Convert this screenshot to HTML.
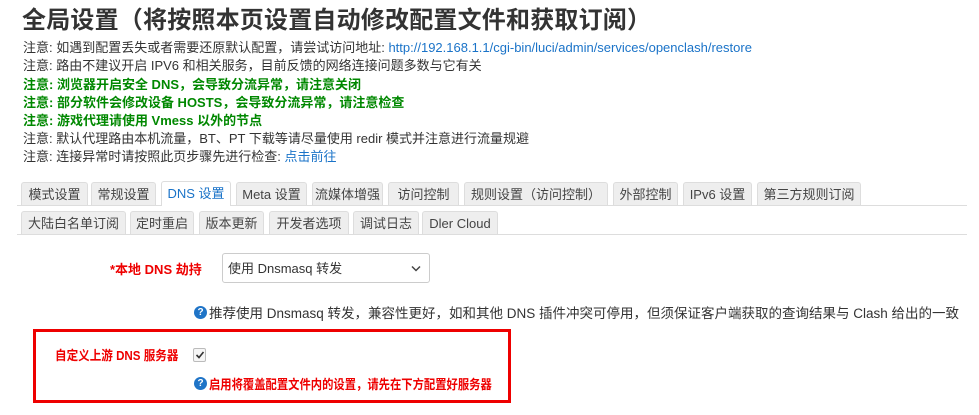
<!DOCTYPE html>
<html><head><meta charset="utf-8"><style>
body{margin:0;width:979px;height:415px;background:#fff;font-family:"Liberation Sans","Noto Sans CJK SC",sans-serif;color:#333;position:relative;overflow:hidden}
.a{position:absolute;white-space:nowrap}
h1{position:absolute;left:22px;top:4px;margin:0;font-size:24px;font-weight:bold;color:#333;line-height:34px;letter-spacing:0.2px}
.n{position:absolute;left:23px;font-size:13px;line-height:18px;white-space:nowrap}
.g{color:#080;font-weight:bold}
a{color:#1a73c8;text-decoration:none}
.tab{position:absolute;height:23px;background:#eee;border:1px solid #ddd;border-bottom:none;border-radius:3px 3px 0 0;font-size:13px;line-height:23px;text-align:center;box-sizing:border-box;color:#444;white-space:nowrap}
.tab.act{background:#fff;color:#1a73c8;height:25px}
.line{position:absolute;left:17px;width:950px;height:1px;background:#ddd}
.help{position:absolute;width:13px;height:13px;border-radius:50%;background:#1f74c7;color:#fff;font-size:10px;line-height:13px;text-align:center;font-weight:bold}
</style></head><body>
<h1>全局设置（将按照本页设置自动修改配置文件和获取订阅）</h1>
<div class="n" style="top:39px">注意: 如遇到配置丢失或者需要还原默认配置，请尝试访问地址: <a>http://192.168.1.1/cgi-bin/luci/admin/services/openclash/restore</a></div>
<div class="n" style="top:57px">注意: 路由不建议开启 IPV6 和相关服务，目前反馈的网络连接问题多数与它有关</div>
<div class="n g" style="top:76px">注意: 浏览器开启安全 DNS，会导致分流异常，请注意关闭</div>
<div class="n g" style="top:94px">注意: 部分软件会修改设备 HOSTS，会导致分流异常，请注意检查</div>
<div class="n g" style="top:112px">注意: 游戏代理请使用 Vmess 以外的节点</div>
<div class="n" style="top:130px">注意: 默认代理路由本机流量，BT、PT 下载等请尽量使用 redir 模式并注意进行流量规避</div>
<div class="n" style="top:148px">注意: 连接异常时请按照此页步骤先进行检查: <a>点击前往</a></div>

<div class="line" style="top:205px"></div>
<div class="tab" style="left:21px;top:182px;width:67px">模式设置</div>
<div class="tab" style="left:91px;top:182px;width:65px">常规设置</div>
<div class="tab act" style="left:161px;top:181px;width:70px">DNS 设置</div>
<div class="tab" style="left:236px;top:182px;width:71px">Meta 设置</div>
<div class="tab" style="left:312px;top:182px;width:71px">流媒体增强</div>
<div class="tab" style="left:388px;top:182px;width:71px">访问控制</div>
<div class="tab" style="left:464px;top:182px;width:144px">规则设置（访问控制）</div>
<div class="tab" style="left:613px;top:182px;width:65px">外部控制</div>
<div class="tab" style="left:683px;top:182px;width:69px">IPv6 设置</div>
<div class="tab" style="left:757px;top:182px;width:104px">第三方规则订阅</div>

<div class="line" style="top:234px"></div>
<div class="tab" style="left:21px;top:211px;width:105px">大陆白名单订阅</div>
<div class="tab" style="left:130px;top:211px;width:64px">定时重启</div>
<div class="tab" style="left:199px;top:211px;width:65px">版本更新</div>
<div class="tab" style="left:269px;top:211px;width:80px">开发者选项</div>
<div class="tab" style="left:353px;top:211px;width:66px">调试日志</div>
<div class="tab" style="left:422px;top:211px;width:76px">Dler Cloud</div>

<div class="a" style="left:110px;top:259px;font-size:13px;color:#e00;font-weight:bold">*本地 DNS 劫持</div>
<div class="a" style="left:222px;top:253px;width:208px;height:30px;border:1px solid #ccc;border-radius:3px;box-sizing:border-box;font-size:13px;line-height:30px;padding-left:5px;color:#333">使用 Dnsmasq 转发
<svg style="position:absolute;right:8px;top:11px" width="10" height="7" viewBox="0 0 10 7"><path d="M1 1.5L5 5.5L9 1.5" stroke="#444" stroke-width="1.5" fill="none"/></svg></div>
<div class="help" style="left:194px;top:306px">?</div>
<div class="a" style="left:209px;top:302px;font-size:13.5px">推荐使用 Dnsmasq 转发，兼容性更好，如和其他 DNS 插件冲突可停用，但须保证客户端获取的查询结果与 Clash 给出的一致</div>

<div class="a" style="left:33px;top:329px;width:478px;height:74px;border:3px solid #e00;box-sizing:border-box"></div>
<div class="a" style="left:55px;top:345px;font-size:13px;color:#e00;font-weight:bold;transform:scaleX(0.89);transform-origin:left">自定义上游 DNS 服务器</div>
<div class="a" style="left:193px;top:348px;width:13px;height:14px;border:1px solid #bbb;border-radius:2px;background:#f6f6f6;box-sizing:border-box"></div>
<svg class="a" style="left:195px;top:350px" width="10" height="10" viewBox="0 0 10 10"><path d="M1.5 5L4 7.5L8.5 2" stroke="#333" stroke-width="1.6" fill="none"/></svg>
<div class="help" style="left:194px;top:377px">?</div>
<div class="a" style="left:209px;top:374px;font-size:13px;color:#e00;font-weight:bold;transform:scaleX(0.87);transform-origin:left">启用将覆盖配置文件内的设置，请先在下方配置好服务器</div>
</body></html>
